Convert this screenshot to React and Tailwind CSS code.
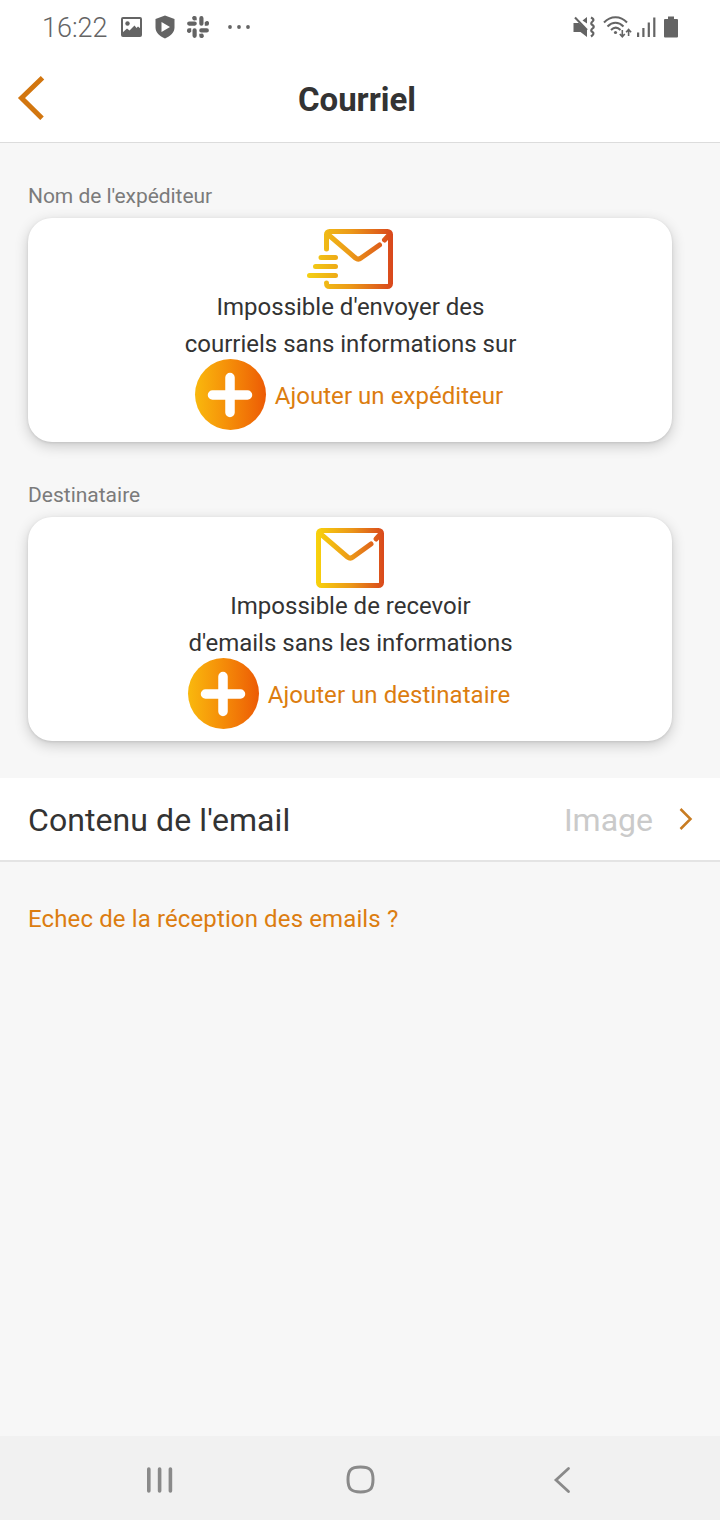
import React from 'react';

function StatusBar() {
  return (
    <div className="h-14 bg-white flex justify-between items-center pl-[42px] pr-[42px] pb-[2px] text-[#646464]">
      <div className="flex items-center">
        <span className="text-[27px] leading-none w-[79px] whitespace-nowrap pt-[2px] font-light">16:22</span>
        <svg className="w-[21px] h-[20px]" viewBox="0 0 21 20" fill="none">
          <rect x="1" y="1" width="19" height="18" rx="1" stroke="currentColor" strokeWidth="2" />
          <circle cx="6.5" cy="6.5" r="2.2" fill="currentColor" />
          <path d="M1 16l5-4.500 2.500 2 5-5 2 2.500L17 9.500l3 2.500v7H1z" fill="currentColor" />
        </svg>
        <svg className="w-[20px] h-[24px] ml-[13px]" viewBox="0 0 20 24" fill="currentColor">
          <path fillRule="evenodd" d="M10 .5L19.500 4v8.500c0 5-4 8.700-9.500 11C4.500 21.200.5 17.500.5 12.500V4zM6.500 7v10L15 12z" />
        </svg>
        <svg className="w-[22px] h-[22px] ml-[12px]" viewBox="0 0 22 22" fill="currentColor">
          <path d="M6.500 0h1.200a2 2 0 0 1 2 2v2.200H8.300A2.100 2.100 0 0 1 6.500 0zM2.200 5.500h5.500a2.100 2.100 0 0 1 0 4.200H2.200a2.100 2.100 0 0 1 0-4.200z" />
          <path d="M22 6.500v1.200a2 2 0 0 1-2 2h-2.200V8.300A2.100 2.100 0 0 1 22 6.500zM16.500 2.200v5.500a2.100 2.100 0 0 1-4.200 0V2.200a2.100 2.100 0 0 1 4.200 0z" />
          <path d="M15.500 22h-1.200a2 2 0 0 1-2-2v-2.200h1.400a2.100 2.100 0 0 1 1.800 4.200zM19.800 16.500h-5.500a2.100 2.100 0 0 1 0-4.200h5.500a2.100 2.100 0 0 1 0 4.200z" />
          <path d="M0 15.500v-1.200a2 2 0 0 1 2-2h2.200v1.400A2.100 2.100 0 0 1 0 15.500zM5.500 19.800v-5.500a2.100 2.100 0 0 1 4.200 0v5.500a2.100 2.100 0 0 1-4.200 0z" />
        </svg>
        <svg className="w-[24px] h-[4px] ml-[18px]" viewBox="0 0 24 4" fill="currentColor">
          <circle cx="3" cy="2" r="1.9" />
          <circle cx="12" cy="2" r="1.9" />
          <circle cx="21" cy="2" r="1.9" />
        </svg>
      </div>

      <div className="flex items-center">
        {/* Muted + vibrate */}
        <svg className="w-[23px] h-[22px]" viewBox="0 0 23 22" fill="none">
          <path d="M.5 7H6l8 6.500V21l-6.500-5h-7zM14 1v6.500L9.500 4.500z" fill="currentColor" />
          <path d="M2 1.500l12 12.500" stroke="currentColor" strokeWidth="2" />
          <path d="M18 1.500q4 2 1.500 4t0 3.500 0 3.500 0 3.500T18 20.500" stroke="currentColor" strokeWidth="2.200" />
        </svg>
        <svg className="w-[29px] h-[22px] ml-[7px]" viewBox="0 0 29 22" fill="none" stroke="currentColor" strokeWidth="2">
          <path d="M1 6.500C7.500-.5 17.500-.5 24 6.500M4.500 10.500c5-5 11-5 16 0M8 14c3-3 6.500-3 9.500 0" />
          <circle cx="12.500" cy="16.500" r="1.600" fill="currentColor" stroke="none" />
          <path d="M19.300 14v6.500M16.800 18l2.500 2.800 2.500-2.800M25.600 20v-6.500M23.100 16.200l2.500-2.800 2.500 2.800" strokeWidth="1.600" />
        </svg>
        <svg className="w-[19px] h-[20px] ml-[5px]" viewBox="0 0 19 20" fill="currentColor">
          <path d="M0 15.500h2.200V20H0zM5.300 11h2.200v9H5.300zM10.700 5.500h2.200V20h-2.200zM16.200.5h2.200V20h-2.200z" />
        </svg>
        <svg className="w-[14px] h-[22px] ml-[8px]" viewBox="0 0 14 22" fill="currentColor">
          <path d="M4 .5h6V3h3a1 1 0 0 1 1 1v16.500a1 1 0 0 1-1 1H1a1 1 0 0 1-1-1V4a1 1 0 0 1 1-1h3z" />
        </svg>
      </div>
    </div>
  );
}

function SendMailIcon() {
  return (
    <svg className="w-[88px] h-[62px]" viewBox="0 0 88 62" fill="none" stroke="url(#sendGradient)" strokeWidth="5" strokeLinecap="round" strokeLinejoin="round">
      <defs>
        <linearGradient id="sendGradient" gradientUnits="userSpaceOnUse" x1="2" y1="31" x2="86" y2="31">
          <stop offset="0" stopColor="#f3cf14" />
          <stop offset="0.500" stopColor="#ec9a18" />
          <stop offset="1" stopColor="#d9481c" />
        </linearGradient>
      </defs>
      <path d="M20.500 21V6.500a3 3 0 0 1 3-3h58a3 3 0 0 1 3 3v49a3 3 0 0 1-3 3h-58c-2 0-3-1-3-3.500" />
      <path d="M21.500 6l28 24c2 1.600 3.500 1.600 5.500 0l18.500-13M78.500 12l5-5.500" strokeWidth="5" />
      <path d="M15 29.500h14.500M9.500 38.500h20M3.500 47.500h26" />
    </svg>
  );
}

function MailIcon() {
  return (
    <svg className="w-[88px] h-[62px]" viewBox="0 0 88 62" fill="none" stroke="url(#mailGradient)" strokeWidth="5" strokeLinecap="round" strokeLinejoin="round">
      <defs>
        <linearGradient id="mailGradient" gradientUnits="userSpaceOnUse" x1="10" y1="31" x2="78" y2="31">
          <stop offset="0" stopColor="#f8d30c" />
          <stop offset="0.500" stopColor="#ec9a18" />
          <stop offset="1" stopColor="#d9481c" />
        </linearGradient>
      </defs>
      <rect x="12.500" y="3.500" width="63" height="55" rx="3" />
      <path d="M13.500 6l28 24c2 1.600 3.500 1.600 5.500 0l18-13M70 12l5-5.500" strokeWidth="5" />
    </svg>
  );
}

function EmptyCard({ icon, lines, action }) {
  return (
    <div className="h-[224px] bg-white rounded-[24px] pt-[10px] flex flex-col items-center shadow-[0_4px_14px_rgba(0,0,0,0.19),0_1px_3px_rgba(0,0,0,0.1)]">
      {icon}
      <div className="text-center text-[24px] leading-[37px] text-[#333] -mt-[1px] pl-px">
        {lines.map((line) => (
          <p key={line}>{line}</p>
        ))}
      </div>
      <button className="flex items-center gap-[9px] -mt-[4px] pr-[2px]">
        <span className="w-[71px] h-[71px] rounded-full bg-linear-to-r from-[#f9b80d] to-[#ec5a05] flex items-center justify-center">
          <svg className="w-[46px] h-[46px]" viewBox="0 0 46 46" stroke="#fff" strokeWidth="9.500" strokeLinecap="round">
            <path d="M23 5.500v35M5.500 23h35" />
          </svg>
        </span>
        <span className="text-[24px] leading-[30px] tracking-[0.050px] text-[#dc7d10] whitespace-nowrap pt-[2px]">{action}</span>
      </button>
    </div>
  );
}

export default function App() {
  return (
    <div className="w-[720px] h-[1520px] bg-[#f7f7f7] flex flex-col overflow-hidden font-[Roboto,sans-serif]">
      <StatusBar />

      {/* Header */}
      <header className="h-[87px] bg-white border-b border-[#dcdcdc] grid grid-cols-[1fr_auto_1fr] items-center">
        <button className="pl-[17px] -mt-[2px]">
          <svg className="w-[28px] h-[44px]" viewBox="0 0 28 44" fill="none" stroke="#d2760f" strokeWidth="5">
            <path d="M25.500 1.800L4.500 22l20.500 20.300" />
          </svg>
        </button>
        <h1 className="text-[33px] leading-[40px] font-bold text-[#333] pr-[6px] pt-[2px]">Courriel</h1>
      </header>

      <main className="flex-1">
        <div className="px-7 pr-12">
          <p className="pt-[40px] h-[75px] text-[21px] leading-[26px] tracking-[-0.050px] text-[#7b7b7b]">Nom de l'expéditeur</p>
          <EmptyCard
            icon={<SendMailIcon />}
            lines={["Impossible d'envoyer des", 'courriels sans informations sur']}
            action="Ajouter un expéditeur"
          />
          <p className="pt-[40px] h-[75px] text-[21px] leading-[26px] text-[#7b7b7b]">Destinataire</p>
          <EmptyCard
            icon={<MailIcon />}
            lines={['Impossible de recevoir', "d'emails sans les informations"]}
            action="Ajouter un destinataire"
          />
        </div>

        {/* Email content row */}
        <div className="mt-[37px] h-[84px] bg-white border-b-2 border-[#e4e4e4] flex items-center pl-7 pr-[27px] text-[32px] leading-[40px]">
          <span className="flex-1 text-[#333] pt-[2px] tracking-[0.080px]">Contenu de l'email</span>
          <span className="text-[#cacaca] pt-[2px]">Image</span>
          <svg className="w-[14px] h-[24px] ml-[26px]" viewBox="0 0 14 24" fill="none" stroke="#c87c22" strokeWidth="2.500">
            <path d="M1.500 2l10 10-10 10" />
          </svg>
        </div>

        <p className="pl-7 pt-[42px] text-[24px] leading-[30px] tracking-[0.120px] text-[#dc7d10]">Echec de la réception des emails ?</p>
      </main>

      {/* Navigation bar */}
      <nav className="h-[84px] bg-[#f1f1f1] flex items-center pt-[3px] text-[#8a8a8a]">
        <svg className="w-[26px] h-[28px] ml-[147px]" viewBox="0 0 26 28" stroke="currentColor" strokeWidth="3.600" strokeLinecap="round">
          <path d="M1.800 3v22M12.600 3v22M23.400 3v22" />
        </svg>
        <svg className="w-[30px] h-[30px] ml-[172px]" viewBox="0 0 30 30" fill="none" stroke="currentColor" strokeWidth="3">
          <path d="M15.500 2c9.500 0 12.500 3 12.500 12.500S25 27 15.500 27 3 24 3 14.500 6 2 15.500 2z" />
        </svg>
        <svg className="w-[18px] h-[28px] ml-[178px]" viewBox="0 0 18 28" fill="none" stroke="currentColor" strokeWidth="2.800" strokeLinecap="round">
          <path d="M15.500 2.500L3 14l12.500 11.500" />
        </svg>
      </nav>
    </div>
  );
}
